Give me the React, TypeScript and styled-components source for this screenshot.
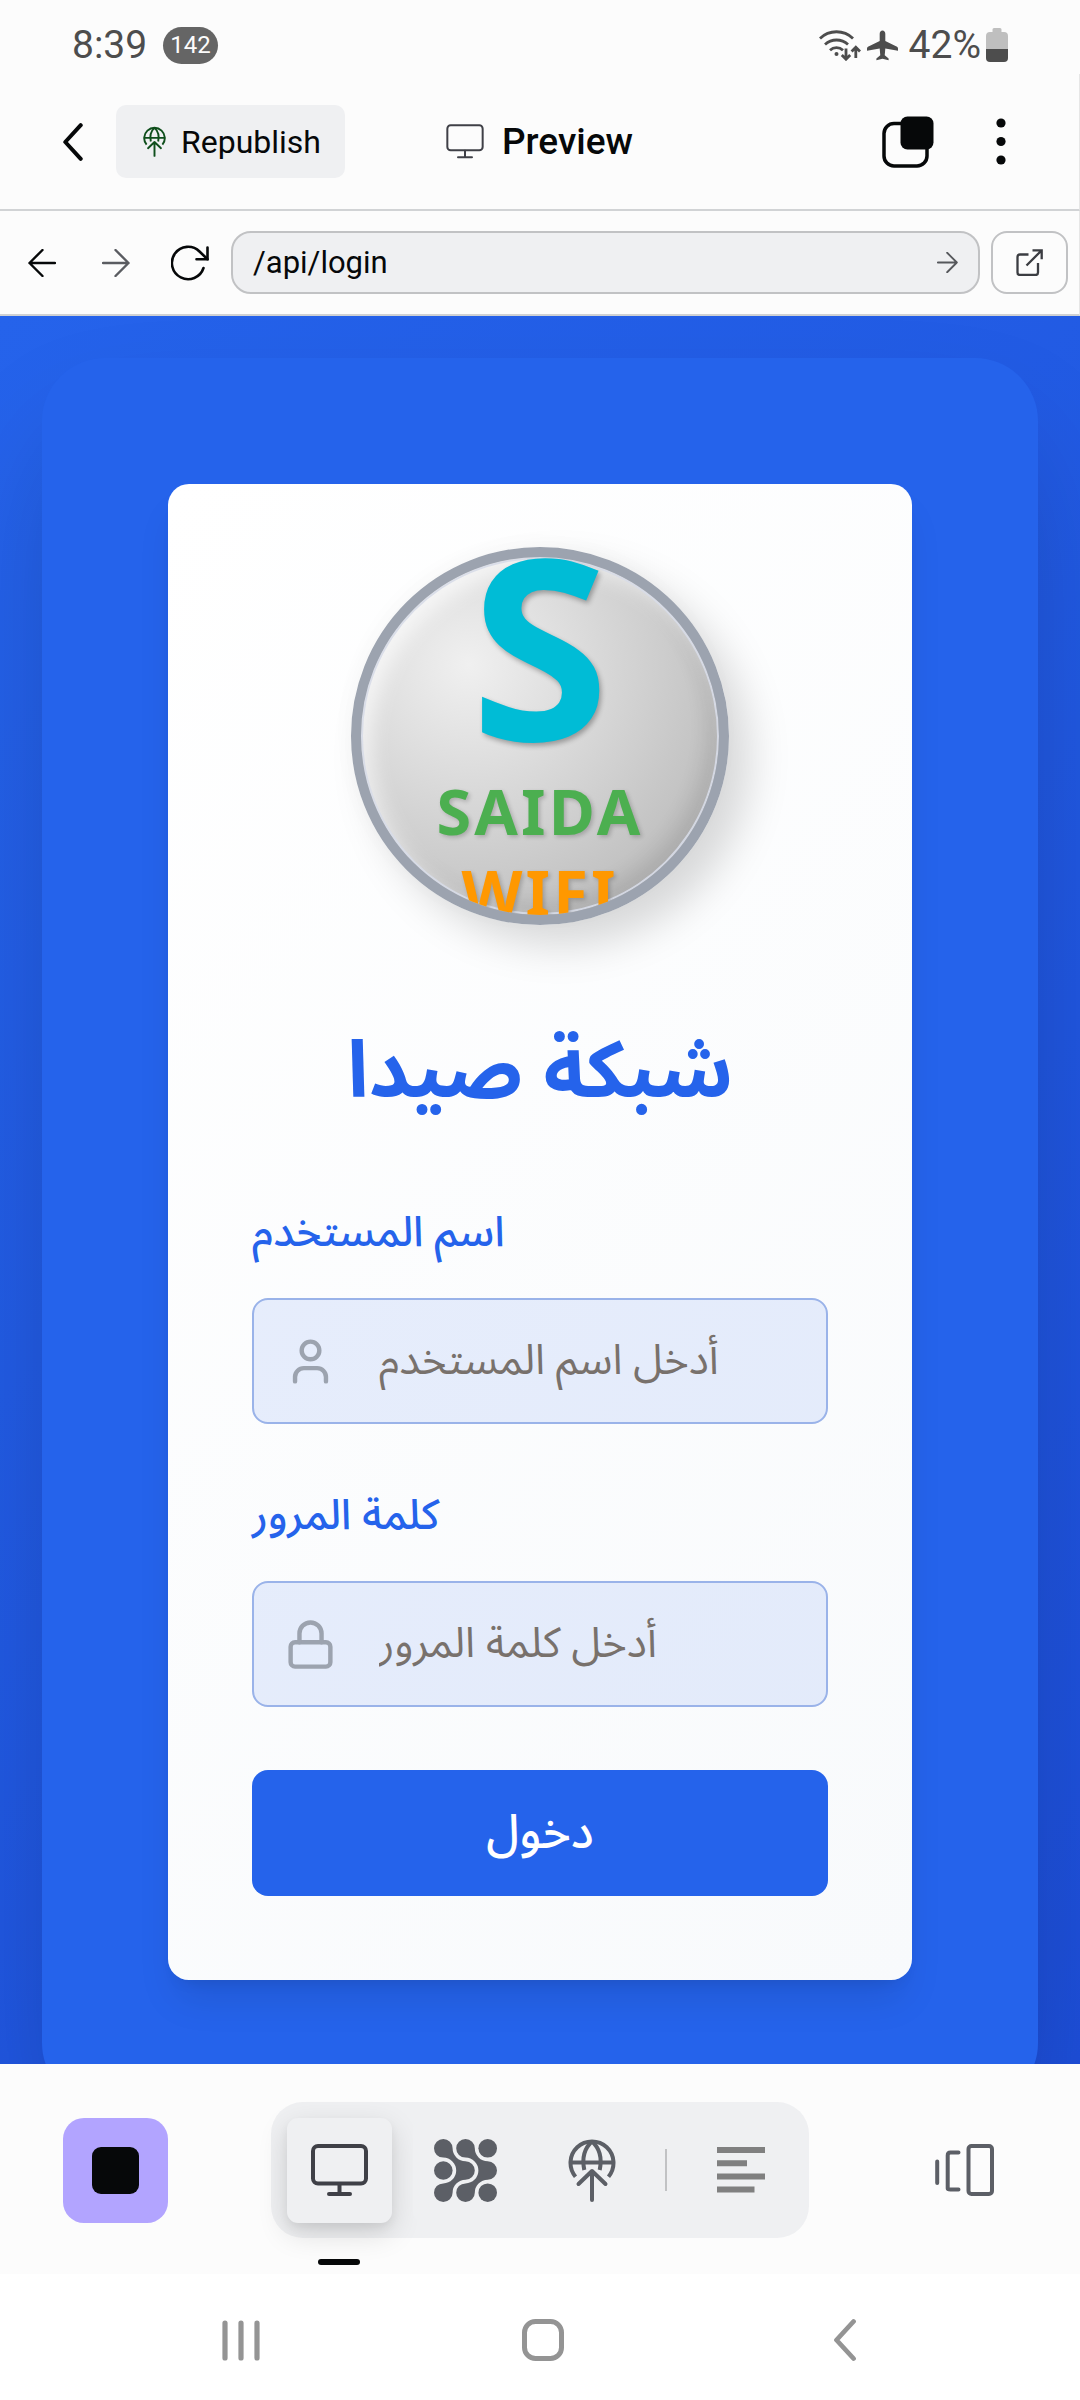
import React from "react";
import styled, { createGlobalStyle } from "styled-components";
import { User, Lock } from "lucide-react";

const GlobalStyle = createGlobalStyle`
  *, *::before, *::after { box-sizing: border-box; }
  body { margin: 0; background: #fcfcfc; font-family: Roboto, "Liberation Sans", sans-serif; }
  button, input { font: inherit; }
  svg { display: block; flex: none; }
`;

const arabic = `"Noto Sans Arabic", "Noto Sans", "DejaVu Sans", sans-serif`;

const Shell = styled.div`
  display: flex;
  flex-direction: column;
  height: 100vh;
  overflow: hidden;
  background: #fcfcfc;
`;

/* ---------- status bar ---------- */

const StatusBar = styled.div`
  display: flex;
  align-items: center;
  justify-content: space-between;
  height: 74px;
  padding: 16px 72px 0;
  color: #4d4d4d;
  font-size: 39px;
  line-height: 44px;
`;

const StatusGroup = styled.div<{ $gap: number }>`
  display: flex;
  align-items: center;
  gap: ${(p) => p.$gap}px;
`;

const CountBadge = styled.span`
  padding: 0 7px;
  border-radius: 19px;
  background: #656565;
  color: #fcfcfc;
  font-size: 24px;
  line-height: 37px;
  text-align: center;
`;

/* ---------- app header ---------- */

const Header = styled.header`
  display: grid;
  grid-template-columns: 1fr auto 1fr;
  align-items: center;
  height: 137px;
  padding: 0 38px;
  border-bottom: 2px solid #d1d3d5;
  border-right: 1px solid #e6e6e6;
`;

const HeaderStart = styled.div`
  display: flex;
  align-items: center;
  gap: 8px;
`;

const HeaderEnd = styled.div`
  display: flex;
  align-items: center;
  justify-content: flex-end;
  gap: 43px;
  padding-right: 17px;
`;

const IconButton = styled.button<{ $size: number }>`
  display: grid;
  place-items: center;
  flex: none;
  width: ${(p) => p.$size}px;
  height: ${(p) => p.$size}px;
  padding: 0;
  border: 0;
  background: transparent;
  color: #060809;
`;

const Republish = styled.button`
  display: flex;
  align-items: center;
  gap: 15px;
  height: 73px;
  padding: 0 24px 0 27px;
  border: 0;
  border-radius: 10px;
  background: #eff0f2;
  color: #060809;
  font-size: 32px;
  line-height: 40px;

  svg { color: #0f4f1c; }
`;

const Title = styled.h1`
  display: flex;
  align-items: center;
  gap: 18px;
  margin: 0;
  color: #060809;
  font-size: 37px;
  font-weight: 500;
  line-height: 44px;

  svg { color: #3f4047; }
`;

/* ---------- address bar ---------- */

const AddressBar = styled.nav`
  display: flex;
  align-items: center;
  height: 105px;
  padding: 0 11px 0 5px;
  border-bottom: 2px solid #cfd1d3;
  border-right: 1px solid #e6e6e6;
`;

const AddressForm = styled.form`
  display: flex;
  flex: 1;
  align-items: center;
  height: 63px;
  margin: 0 11px 0 4px;
  padding: 0 10px 0 20px;
  border: 2px solid #c1c2c4;
  border-radius: 20px;
  background: #eff0f2;
`;

const AddressInput = styled.input`
  flex: 1;
  min-width: 0;
  padding: 0;
  border: 0;
  outline: 0;
  background: transparent;
  color: #060809;
  font-size: 31px;
  line-height: 40px;
`;

const OpenLink = styled.a`
  display: grid;
  place-items: center;
  width: 77px;
  height: 63px;
  border: 2px solid #c1c2c4;
  border-radius: 16px;
  color: #3b3d42;
`;

/* ---------- previewed page ---------- */

const Preview = styled.main`
  flex: 1;
  min-height: 0;
  overflow: hidden;
  padding: 42px;
  background: linear-gradient(135deg, #2563eb, #1d4ed8);
`;

const Panel = styled.section`
  padding: 126px;
  border-radius: 63px;
  background: #2563eb;
  box-shadow: 0 66px 131px -32px rgba(0, 0, 0, 0.25);
`;

const Card = styled.div`
  padding: 63px 84px 84px;
  border-radius: 21px;
  background: linear-gradient(135deg, #ffffff, #f8fafc);
  box-shadow: 0 26px 39px -8px rgba(0, 0, 0, 0.1), 0 10px 16px -10px rgba(0, 0, 0, 0.1);
`;

const Logo = styled.div`
  display: flex;
  flex-direction: column;
  align-items: center;
  justify-content: center;
  gap: 2px;
  width: 378px;
  height: 378px;
  margin: 0 auto;
  padding-bottom: 24px;
  overflow: hidden;
  border: 10px solid #9ca3af;
  border-radius: 50%;
  background: radial-gradient(circle at 30% 30%, #f0f0f0, #d0d0d0 50%, #b0b0b0);
  box-shadow: 21px 21px 42px rgba(0, 0, 0, 0.15), -4px -4px 21px rgba(0, 0, 0, 0.02),
    inset 0 0 0 2px rgba(215, 220, 232, 0.9), inset 10px 10px 20px rgba(255, 255, 255, 0.7),
    inset -10px -10px 20px rgba(0, 0, 0, 0.1);
  font-family: "Noto Sans", "Open Sans", sans-serif;
  font-weight: 700;
`;

const LogoLetter = styled.span`
  flex: none;
  color: #00bcd6;
  font-size: 252px;
  line-height: 252px;
  text-shadow: 2px 3px 5px rgba(0, 0, 0, 0.3);
`;

const LogoWord = styled.span<{ $color: string }>`
  flex: none;
  color: ${(p) => p.$color};
  font-size: 63px;
  line-height: 79px;
  letter-spacing: 0.05em;
  text-shadow: 2px 2px 4px rgba(0, 0, 0, 0.2);
`;

const NetworkName = styled.h2`
  margin: 87px 0 72px;
  color: #2563eb;
  font-family: ${arabic};
  font-size: 79px;
  font-weight: 700;
  line-height: 120px;
  text-align: center;
`;

const LoginForm = styled.form`
  display: flex;
  flex-direction: column;
  gap: 63px;
`;

const Field = styled.div`
  display: flex;
  flex-direction: column;
  gap: 36px;
`;

const Label = styled.label`
  color: #2563eb;
  font-family: ${arabic};
  font-size: 42px;
  font-weight: 500;
  line-height: 58px;
`;

const InputBox = styled.div`
  display: flex;
  align-items: center;
  gap: 42px;
  height: 126px;
  padding: 0 30px;
  border: 2px solid #9ab3e9;
  border-radius: 16px;
  background: rgba(37, 99, 235, 0.1);
  color: #9ca3af;
`;

const TextInput = styled.input`
  flex: 1;
  min-width: 0;
  padding: 0;
  border: 0;
  outline: 0;
  background: transparent;
  color: #1c1917;
  font-family: ${arabic};
  font-size: 42px;
  line-height: 58px;
  &::placeholder { color: #78716c; opacity: 1; }
`;

const Submit = styled.button`
  height: 126px;
  padding: 0;
  border: 0;
  border-radius: 16px;
  background: #2563eb;
  color: #ffffff;
  font-family: ${arabic};
  font-size: 47px;
  font-weight: 500;
`;

/* ---------- bottom bars ---------- */

const ToolBar = styled.footer`
  display: flex;
  align-items: center;
  justify-content: space-between;
  height: 210px;
  padding: 2px 63px 0;
  background: #fcfcfc;
`;

const StopButton = styled(IconButton)`
  border-radius: 21px;
  background: #b2a4ff;
`;

const StopSquare = styled.span`
  width: 47px;
  height: 47px;
  border-radius: 9px;
  background: #060809;
`;

const ToolGroup = styled.div`
  display: flex;
  align-items: center;
  gap: 21px;
  height: 136px;
  padding: 0 16px;
  border-radius: 32px;
  background: #eff0f2;
`;

const ToolButton = styled(IconButton)<{ $active?: boolean }>`
  position: relative;
  border-radius: 11px;
  background: #eff0f2;
  color: ${(p) => (p.$active ? "#3f4047" : "#5c5f66")};
  box-shadow: ${(p) => (p.$active ? "0 10px 30px rgba(0, 0, 0, 0.14), 0 5px 10px rgba(0, 0, 0, 0.06)" : "none")};
`;

const ActiveMark = styled.span`
  position: absolute;
  left: 31px;
  bottom: -42px;
  width: 42px;
  height: 6px;
  border-radius: 3px;
  background: #060809;
`;

const Divider = styled.span`
  width: 2px;
  height: 42px;
  background: #c1c2c4;
`;

const SystemNav = styled.nav`
  display: flex;
  align-items: center;
  justify-content: space-around;
  height: 126px;
  padding: 6px 84px 0 90px;
  background: #ffffff;
`;

const NavButton = styled(IconButton)`
  color: #949494;
`;

/* ---------- drawings ---------- */

const WifiIcon = () => (
  <svg width="42" height="32" viewBox="0 0 42 32" fill="none" stroke="currentColor" strokeWidth="2.8">
    <path d="M1 9.5A23.5 23.5 0 0 1 34 9.5" />
    <path d="M6 15.5A17 17 0 0 1 29 15.5" />
    <path d="M11 21.2A9.5 9.5 0 0 1 24 21.2" />
    <circle cx="17.5" cy="25" r="2" fill="currentColor" stroke="none" />
    <path d="M27 19.5v10M22.8 26l4.2 4.2 4.2-4.2M36.8 29v-10M32.6 22.5l4.2-4.2 4.2 4.2" strokeWidth="2.8" />
  </svg>
);

const PlaneIcon = () => (
  <svg width="31" height="31" viewBox="0 0 32 31" fill="currentColor">
    <path d="M16 0c1.7 0 2.9 1.4 2.9 3.3v7.6L31 16.8q1 .6 1 1.800v2.400l-13.100-2.500-.6 7 4 3.300v1.900L16 29.200l-6.300 1.500v-1.900l4-3.300-.6-7L0 21v-2.400q0-1.200 1-1.800l12.100-5.900V3.300C13.100 1.400 14.300 0 16 0z" />
  </svg>
);

const BatteryIcon = () => (
  <svg width="22" height="34" viewBox="0 0 22 34">
    <path d="M6.5 1.5q0-1.500 1.500-1.500h6q1.500 0 1.500 1.500V4H18q4 0 4 4v13H0V8q0-4 4-4h2.500z" fill="#bfbfbf" />
    <path d="M0 21h22v9q0 4-4 4H4q-4 0-4-4z" fill="#4d4d4d" />
  </svg>
);

const BackIcon = ({ width, stroke }: { width: number; stroke: number }) => (
  <svg width={width} height={width * 2} viewBox="0 0 22 44" fill="none" stroke="currentColor" strokeWidth={stroke} strokeLinecap="round" strokeLinejoin="round">
    <path d="M19.5 3.5L2.5 22l17 18.500" />
  </svg>
);

const PublishIcon = ({ width, height }: { width: number; height: number }) => (
  <svg width={width} height={height} viewBox="0 0 48 64" fill="none" stroke="currentColor" strokeWidth="4">
    <path d="M7.5 38.7A21.5 21.5 0 1 1 40.5 38.7M2.5 24.5h43" />
    <path d="M24 3.5C15.5 11 14 21 16.3 32M24 3.5C32.5 11 34 21 31.7 32" />
    <path d="M24 62V33.5M10.5 46L24 33l13.500 13" strokeLinecap="round" strokeLinejoin="round" />
  </svg>
);

const MonitorIcon = ({ width, stroke }: { width: number; stroke: number }) => (
  <svg width={width} height={(width * 52) / 57} viewBox="0 0 57 52" fill="none" stroke="currentColor" strokeWidth={stroke} strokeLinecap="round">
    <rect x="2" y="2" width="53" height="37.5" rx="5" />
    <path d="M28.5 40v10M18 50h21" />
  </svg>
);

const CopyIcon = () => (
  <svg width="52" height="52" viewBox="0 0 52 52">
    <rect x="2" y="7.5" width="43" height="42.5" rx="10" fill="none" stroke="currentColor" strokeWidth="3.5" />
    <rect x="18.5" y="0.5" width="33" height="33" rx="7" fill="currentColor" />
  </svg>
);

const DotsIcon = () => (
  <svg width="10" height="47" viewBox="0 0 10 47" fill="currentColor">
    <circle cx="5" cy="5" r="4.6" />
    <circle cx="5" cy="23.5" r="4.6" />
    <circle cx="5" cy="42" r="4.6" />
  </svg>
);

const ArrowIcon = ({ size, color, left }: { size: number; color: string; left?: boolean }) => (
  <svg width={size} height={size} viewBox="0 0 28 28" fill="none" stroke={color} strokeWidth="2.4" strokeLinecap="round" strokeLinejoin="round">
    <path d={left ? "M27 14H1.5M14.5 1L1.5 14l13 13" : "M1 14h25.5M13.5 1l13 13-13 13"} />
  </svg>
);

const ReloadIcon = () => (
  <svg width="38" height="36" viewBox="0 0 38 36" fill="none" stroke="#060809" strokeWidth="2.6" strokeLinecap="round">
    <path d="M32.5 23A16.2 16.2 0 1 1 28.5 6.5L36.5 14.2" />
    <path d="M36.5 2.5v11.800H25.5" />
  </svg>
);

const ExternalIcon = () => (
  <svg width="27" height="27" viewBox="0 0 27 27" fill="none" stroke="currentColor" strokeWidth="2.3">
    <path d="M12.5 5.5H4Q1.5 5.5 1.5 8v15.500Q1.5 26 4 26h15.500Q22 26 22 23.5V14" />
    <path d="M16.5 1.3h9.200v9M25.7 1.3L10.5 16.5" />
  </svg>
);

const PatternIcon = () => (
  <svg width="63" height="63" viewBox="0 0 63 63" fill="currentColor">
    <path d="M18.6 9.3A12.9 12.9 0 0 0 31.5 22.2A9.3 9.3 0 0 1 31.5 40.8A12.9 12.9 0 0 0 18.6 53.7A9.3 9.3 0 1 1 9.3 44.4A12.9 12.9 0 0 0 9.3 18.6A9.3 9.3 0 1 1 18.6 9.3Z" />
    <path d="M40.8 9.3A12.9 12.9 0 0 0 53.7 22.2A9.3 9.3 0 0 1 53.7 40.8A12.9 12.9 0 0 0 40.8 53.7A9.3 9.3 0 1 1 31.5 44.4A12.9 12.9 0 0 0 31.5 18.6A9.3 9.3 0 1 1 40.8 9.3Z" />
    <circle cx="9.3" cy="31.5" r="9.3" />
    <circle cx="53.7" cy="9.3" r="9.3" />
    <circle cx="53.7" cy="53.7" r="9.3" />
  </svg>
);

const LinesIcon = () => (
  <svg width="48" height="46" viewBox="0 0 48 46" fill="#808080">
    <path d="M0 0h48v6H0zM0 13.2h30v6H0zM0 26.4h48v6H0zM0 39.6h37.500v6H0z" />
  </svg>
);

const PanelsIcon = () => (
  <svg width="59" height="52" viewBox="0 0 59 52" fill="none" stroke="#5c5f66" strokeWidth="4" strokeLinecap="round" strokeLinejoin="round">
    <path d="M2.2 17.5v21.500M23.5 8.5H15.5Q12.7 8.5 12.7 11.5V44.5Q12.7 45.5 15.5 45.5H23.5" />
    <rect x="33.5" y="2" width="23.5" height="48" rx="3" />
  </svg>
);

const RecentsIcon = () => (
  <svg width="38" height="41" viewBox="0 0 38 41" stroke="currentColor" strokeWidth="5.2" strokeLinecap="round">
    <path d="M3 3v35M19 3v35M35 3v35" />
  </svg>
);

const HomeIcon = () => (
  <svg width="42" height="42" viewBox="0 0 42 42" fill="none" stroke="currentColor" strokeWidth="5">
    <rect x="2.5" y="2.5" width="37" height="37" rx="11" />
  </svg>
);

/* ---------- page ---------- */

export default function App() {
  return (
    <Shell>
      <GlobalStyle />
      <StatusBar>
        <StatusGroup $gap={16}>
          <span>8:39</span>
          <CountBadge>142</CountBadge>
        </StatusGroup>
        <StatusGroup $gap={11}>
          <StatusGroup $gap={6}>
            <WifiIcon />
            <PlaneIcon />
          </StatusGroup>
          <StatusGroup $gap={5}>
            <span>42%</span>
            <BatteryIcon />
          </StatusGroup>
        </StatusGroup>
      </StatusBar>

      <Header>
        <HeaderStart>
          <IconButton $size={70} aria-label="Back">
            <BackIcon width={20} stroke={4.4} />
          </IconButton>
          <Republish>
            <PublishIcon width={23} height={31} />
            Republish
          </Republish>
        </HeaderStart>
        <Title>
          <MonitorIcon width={38} stroke={3} />
          Preview
        </Title>
        <HeaderEnd>
          <IconButton $size={52} aria-label="Tabs">
            <CopyIcon />
          </IconButton>
          <IconButton $size={47} aria-label="More">
            <DotsIcon />
          </IconButton>
        </HeaderEnd>
      </Header>

      <AddressBar aria-label="Address">
        <IconButton $size={74} aria-label="Go back">
          <ArrowIcon size={28} color="#060809" left />
        </IconButton>
        <IconButton $size={74} aria-label="Go forward">
          <ArrowIcon size={28} color="#5a5c61" />
        </IconButton>
        <IconButton $size={74} aria-label="Reload">
          <ReloadIcon />
        </IconButton>
        <AddressForm onSubmit={(e) => e.preventDefault()}>
          <AddressInput aria-label="Path" defaultValue="/api/login" />
          <IconButton $size={42} aria-label="Go">
            <ArrowIcon size={21} color="#56585c" />
          </IconButton>
        </AddressForm>
        <OpenLink href="#" aria-label="Open in new tab">
          <ExternalIcon />
        </OpenLink>
      </AddressBar>

      <Preview>
        <Panel>
          <Card>
            <Logo>
              <LogoLetter>S</LogoLetter>
              <LogoWord $color="#4caf50">SAIDA</LogoWord>
              <LogoWord $color="#ff9800">WIFI</LogoWord>
            </Logo>
            <NetworkName>شبكة صيدا</NetworkName>
            <LoginForm onSubmit={(e) => e.preventDefault()}>
              <Field>
                <Label htmlFor="username">اسم المستخدم</Label>
                <InputBox>
                  <User size={53} strokeWidth={2} />
                  <TextInput id="username" placeholder="أدخل اسم المستخدم" />
                </InputBox>
              </Field>
              <Field>
                <Label htmlFor="password">كلمة المرور</Label>
                <InputBox>
                  <Lock size={53} strokeWidth={2} />
                  <TextInput id="password" type="password" placeholder="أدخل كلمة المرور" />
                </InputBox>
              </Field>
              <Submit>دخول</Submit>
            </LoginForm>
          </Card>
        </Panel>
      </Preview>

      <ToolBar>
        <StopButton $size={105} aria-label="Stop">
          <StopSquare />
        </StopButton>
        <ToolGroup>
          <ToolButton $size={105} $active aria-label="Preview">
            <MonitorIcon width={57} stroke={4} />
            <ActiveMark />
          </ToolButton>
          <ToolButton $size={105} aria-label="Agent">
            <PatternIcon />
          </ToolButton>
          <ToolButton $size={105} aria-label="Publish">
            <PublishIcon width={48} height={64} />
          </ToolButton>
          <Divider />
          <ToolButton $size={105} aria-label="Console">
            <LinesIcon />
          </ToolButton>
        </ToolGroup>
        <IconButton $size={105} aria-label="Switch panels">
          <PanelsIcon />
        </IconButton>
      </ToolBar>

      <SystemNav aria-label="System">
        <NavButton $size={84} aria-label="Recent apps">
          <RecentsIcon />
        </NavButton>
        <NavButton $size={84} aria-label="Home">
          <HomeIcon />
        </NavButton>
        <NavButton $size={84} aria-label="Back">
          <BackIcon width={22} stroke={4.8} />
        </NavButton>
      </SystemNav>
    </Shell>
  );
}
